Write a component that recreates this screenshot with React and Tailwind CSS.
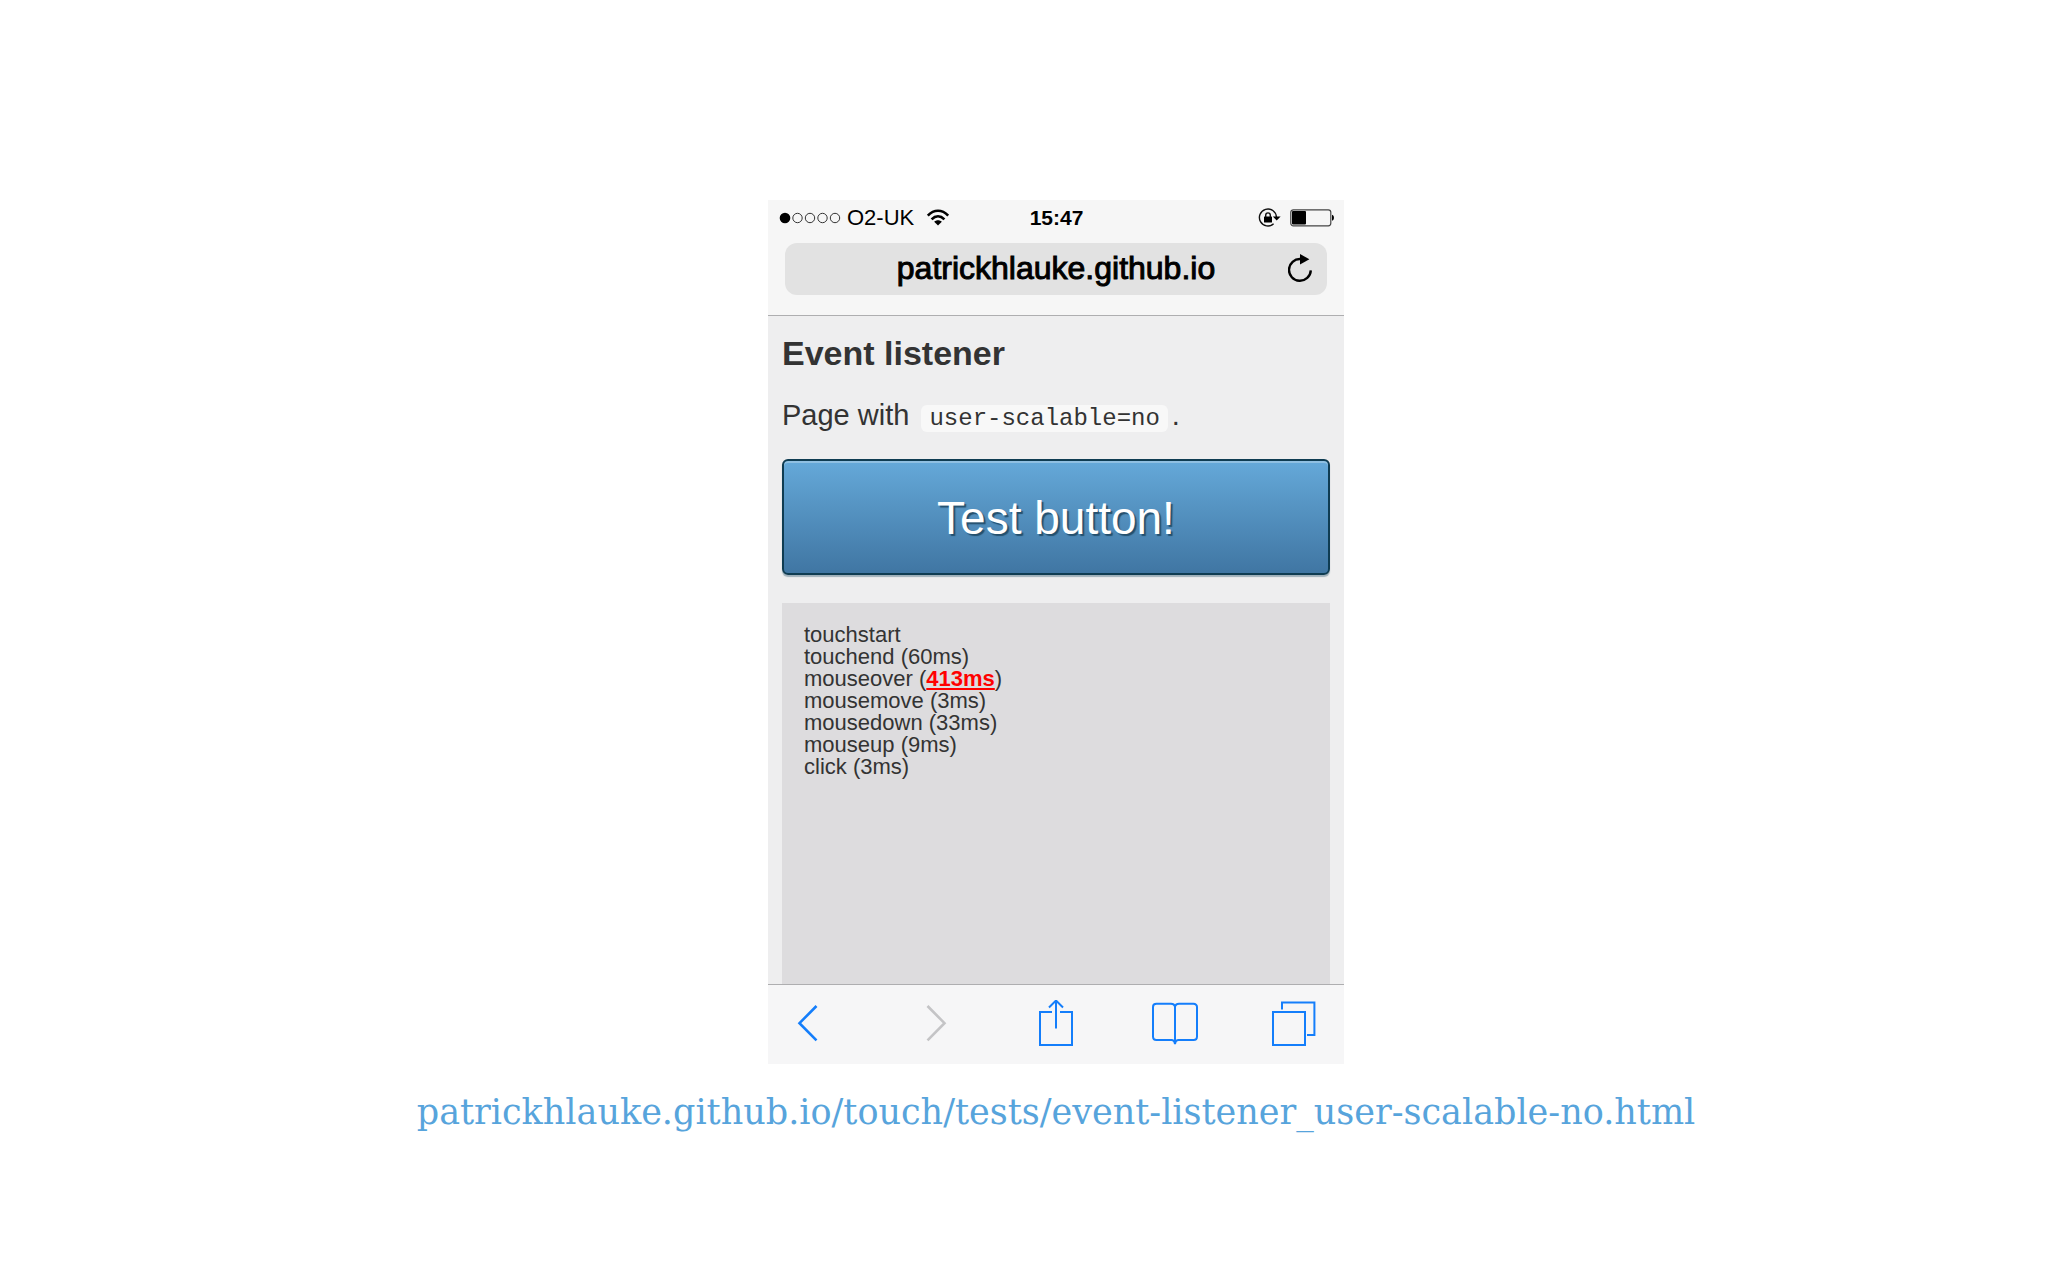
import React from "react";

const events = [
  { name: "touchstart" },
  { name: "touchend", time: "60ms" },
  { name: "mouseover", time: "413ms", slow: true },
  { name: "mousemove", time: "3ms" },
  { name: "mousedown", time: "33ms" },
  { name: "mouseup", time: "9ms" },
  { name: "click", time: "3ms" },
];

function SignalDots() {
  return (
    <svg className="h-4 w-16" viewBox="0 0 64 16" fill="none" stroke="#333" aria-hidden="true">
      <circle cx="6" cy="8" r="5.3" fill="#000" stroke="none" />
      {[18.5, 31, 43.5, 56].map((cx) => (
        <circle key={cx} cx={cx} cy="8" r="4.7" />
      ))}
    </svg>
  );
}

function Wifi() {
  return (
    <svg className="h-5 w-6" viewBox="0 0 24 20" fill="none" stroke="#000" strokeWidth="2.6" aria-hidden="true">
      <path d="M1.8 7.6C8 1.2 16 1.2 22.2 7.6" />
      <path d="M5.6 11.4C9.6 7.4 14.4 7.4 18.4 11.4" />
      <path d="M12 17.6L8.2 13.8C10.4 11.8 13.6 11.8 15.8 13.8Z" fill="#000" stroke="none" />
    </svg>
  );
}

function RotationLock() {
  return (
    <svg className="h-5 w-6" viewBox="0 0 24 20" fill="none" stroke="#111" strokeWidth="1.4" aria-hidden="true">
      <path d="M18.4 9A8.5 8.5 0 1 0 15.6 15.8" />
      <path d="M14.8 8.4L22.6 8.4L18.7 12.6Z" fill="#000" stroke="none" />
      <rect x="6" y="8.6" width="8" height="6" rx="0.5" fill="#000" stroke="none" />
      <path d="M7.7 9.2V7.2a2.3 2.3 0 0 1 4.6 0V9.2" />
    </svg>
  );
}

function Battery() {
  return (
    <svg className="h-5 w-11" viewBox="0 0 44 20" fill="none" aria-hidden="true">
      <rect x="0.8" y="1.8" width="40" height="16" rx="2.5" stroke="#444" strokeWidth="1.2" />
      <rect x="2" y="3" width="14" height="13.6" rx="1" fill="#000" />
      <path d="M42 6.8c2.6 0.6 2.6 5.4 0 6z" fill="#000" />
    </svg>
  );
}

function Reload() {
  return (
    <svg className="h-7 w-6" viewBox="0 0 24 28" fill="none" stroke="#000" strokeWidth="2.4" aria-hidden="true">
      <path d="M12.5 5A10.9 10.9 0 1 0 22.8 16.4" />
      <path d="M12 0V10.4L21.4 5.2Z" fill="#000" stroke="none" />
    </svg>
  );
}

function ToolButton({ label, disabled, children }) {
  return (
    <button
      type="button"
      aria-label={label}
      disabled={disabled}
      className="size-12 text-[#147efb] disabled:text-[#c4c4c6]"
    >
      <svg className="size-12" viewBox="0 0 48 48" fill="none" stroke="currentColor" strokeWidth="2" aria-hidden="true">
        {children}
      </svg>
    </button>
  );
}

export default function App() {
  return (
    <main className="flex min-h-screen flex-col items-center bg-white pt-[200px] pl-16 font-['Liberation_Sans',Arial,sans-serif]">
      <section className="w-full max-w-xl bg-[#eeeeef] text-[#333]">
        <header className="border-b border-[#aeaeb0] bg-[#f6f6f6] pb-5 text-black">
          <div className="grid h-[43px] grid-cols-3 items-center pr-2.5 pb-2 pl-[11px]">
            <div className="flex items-center gap-1">
              <SignalDots />
              <span className="text-[22px] leading-6">O2-UK</span>
              <span className="ml-2">
                <Wifi />
              </span>
            </div>
            <time className="text-center text-[21px] leading-6 font-bold">15:47</time>
            <div className="flex items-center justify-end gap-2">
              <RotationLock />
              <Battery />
            </div>
          </div>
          <div className="mx-[17px] grid h-[52px] grid-cols-[39px_1fr_39px] items-center rounded-xl bg-[#e2e2e2] pb-0.5">
            <span className="col-start-2 text-center text-[32px] leading-10 [-webkit-text-stroke:1px]">
              patrickhlauke.github.io
            </span>
            <button type="button" aria-label="Reload">
              <Reload />
            </button>
          </div>
        </header>

        <div className="px-3.5">
          <h1 className="pt-[15px] text-[34px] leading-11 font-bold">Event listener</h1>
          <p className="mt-[22px] text-[29px] leading-9">
            Page with{" "}
            <code className="ml-1 rounded-md bg-[#f8f8f8] px-2 font-['Liberation_Mono','Courier_New',monospace] text-[24px]">
              user-scalable=no
            </code>
            <span className="ml-1">.</span>
          </p>
          <button
            type="button"
            className="mt-[22px] h-[116px] w-full rounded-md border-2 border-[#0f3c52] bg-linear-to-b from-[#65a9d9] to-[#4076a3] pt-0.5 text-[46px] leading-none text-white shadow-[inset_0_2px_0_#8fc0e2,0_2px_1px_#9fb0ba] [text-shadow:2px_2px_1px_#24506e]"
          >
            Test button!
          </button>
          <ul className="mt-7 h-[381px] bg-[#dddcde] px-[22px] pt-[21px] text-[22px] leading-[22px]">
            {events.map((e) => (
              <li key={e.name}>
                {e.name}
                {e.time && (
                  <>
                    {" ("}
                    {e.slow ? <strong className="text-[#f00] underline">{e.time}</strong> : e.time}
                    {")"}
                  </>
                )}
              </li>
            ))}
          </ul>
        </div>

        <nav className="flex h-20 items-center justify-between border-t border-[#aeaeb0] bg-[#f6f6f7] px-6 pb-px">
          <ToolButton label="Back">
            <path d="M24.5 6L7.5 23.2L24.5 40.4" strokeWidth="2.6" />
          </ToolButton>
          <ToolButton label="Forward" disabled>
            <path d="M15.5 6L32.5 23.2L15.5 40.4" strokeWidth="2.6" />
          </ToolButton>
          <ToolButton label="Share">
            <path d="M20 12H8V45H40V12H28" />
            <path d="M24 28.5V0.5M17 7.5L24 0.5L31 7.5" />
          </ToolButton>
          <ToolButton label="Bookmarks">
            <path d="M23 44V6.5C22.4 4.6 21 3.8 19 3.8H4.5C2.4 3.8 1 5 1 7V36.5C1 38.6 2.4 40 4.5 40H19.5C21.5 40 22.6 41.4 23 44C23.4 41.4 24.5 40 26.5 40H41.5C43.6 40 45 38.6 45 36.5V7C45 5 43.6 3.8 41.5 3.8H27C25 3.8 23.6 4.6 23 6.5" />
          </ToolButton>
          <ToolButton label="Tabs">
            <path d="M1 12H33V45H1Z" />
            <path d="M10 9.4V2.4H42.4V35H35" />
          </ToolButton>
        </nav>
      </section>

      <a
        href="https://patrickhlauke.github.io/touch/tests/event-listener_user-scalable-no.html"
        className="mt-6 font-['Roboto_Slab','DejaVu_Serif',serif] text-[35px] leading-12 text-[#57a4dc]"
      >
        patrickhlauke.github.io/touch/tests/event-listener_user-scalable-no.html
      </a>
    </main>
  );
}
